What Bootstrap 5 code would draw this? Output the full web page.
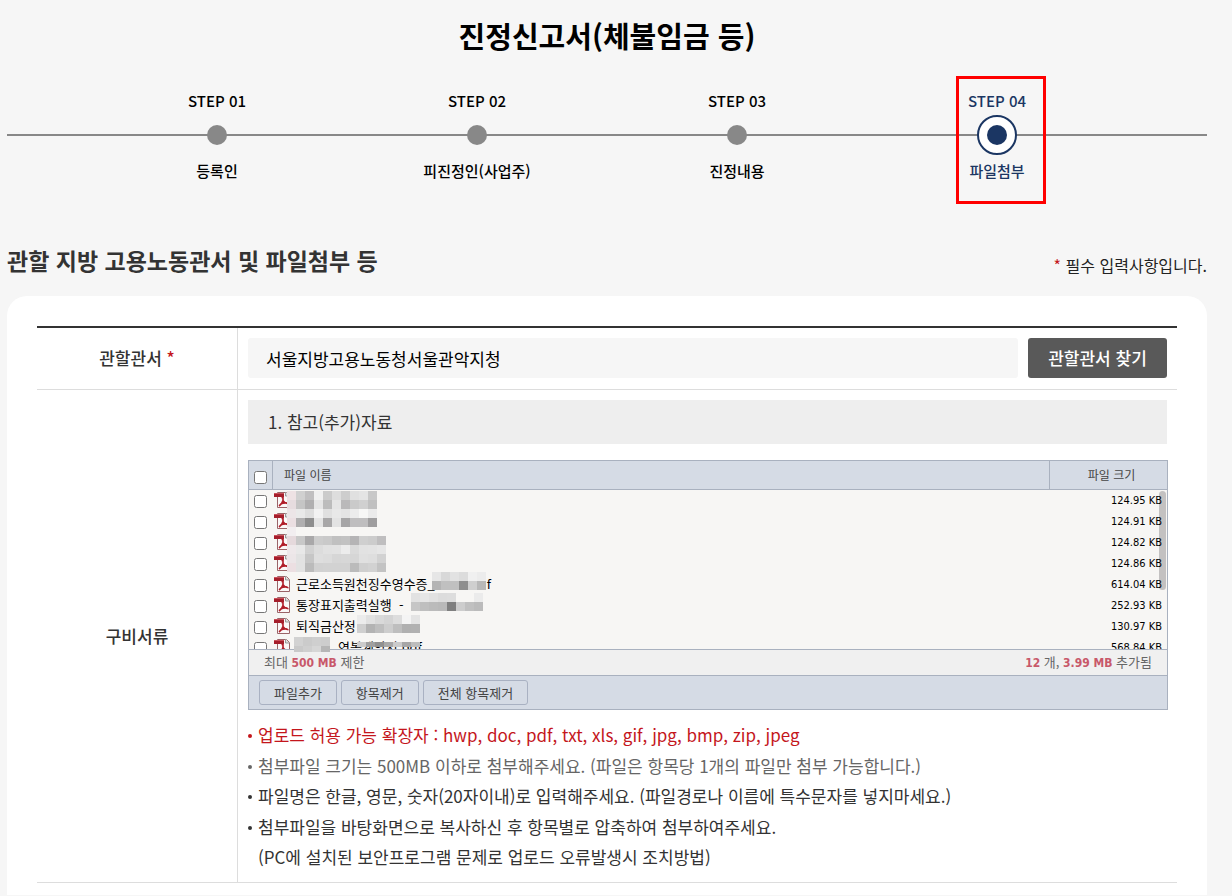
<!DOCTYPE html>
<html lang="ko">
<head>
<meta charset="utf-8">
<meta name="viewport" content="width=device-width, initial-scale=1">
<title>진정신고서(체불임금 등)</title>
<link href="https://cdn.jsdelivr.net/npm/bootstrap@5.3.0/dist/css/bootstrap.min.css" rel="stylesheet">
<style>
body{background:#f6f6f6;color:#333;font-family:"Noto Sans CJK KR",sans-serif;font-size:17px;line-height:24px}
.page{padding:13px 25px 0 7px}
.doc-title{font-size:29px;line-height:44px;font-weight:700;color:#000}
.req{color:#c4161c}

/* step indicator */
.steps{margin-top:19px;padding:0 80px;height:128px}
.steps::before{content:"";position:absolute;left:0;right:0;top:58px;height:2px;background:#888}
.step{font-size:15px;font-weight:500;color:#000;line-height:20px}
.step-box{width:90px;height:128px;padding-top:15px;position:relative}
.step-dot{width:40px;height:40px;margin:4px 0 6px}
.step-dot i{width:20px;height:20px;border-radius:50%;background:#888}
.step.current{color:#1b3663}
.current .step-box::after{content:"";position:absolute;top:0;bottom:0;left:4px;right:-4px;border:3px solid #f00}
.current .step-dot{border:2px solid #1b3663;border-radius:50%;background:#fff}
.current .step-dot i{background:#1b3663}

.section-head{margin-top:39px;margin-bottom:19px}
.section-head h2{font-size:23px;line-height:34px;font-weight:700}
.section-head p{font-size:16px;color:#222}

.panel{background:#fff;border-radius:20px 20px 0 0;padding:30px 30px 12px}
.form-grid{border-top:2px solid #333;border-collapse:separate;border-spacing:0;table-layout:fixed}
.form-grid>tbody>tr>*{border-bottom:1px solid #ddd;padding:10px}
.form-grid>tbody>tr:first-child>*{padding-bottom:11px}
.form-grid>tbody>tr>th{width:201px;border-right:1px solid #ddd;font-weight:500;text-align:center;vertical-align:middle}
.office-row{gap:10px}
.office{height:40px;background:#f6f6f6;border:0;border-radius:3px;padding:0 18px;font-size:17px;color:#000}
.office:focus{background:#f6f6f6}
.find{height:40px;width:139px;background:#595959;color:#fff;border:0;border-radius:3px;font-size:17px;font-weight:500;padding:0}
.find:hover{background:#444;color:#fff}
.sub-title{background:#eee;height:44px;padding:0 20px;font-size:17px;font-weight:400}

/* upload box */
.uploader{margin:16px -1px 10px 0;border:1px solid #a9b1bf;font-size:12px;line-height:16px;color:#444}
.uploader input{width:13px;height:13px;margin:0;display:block}
.up-head{height:29px;background:#d5dbe5;border-bottom:1px solid #a9b1bf}
.c-check{width:24px}
.up-head .c-check{width:23px;padding:5px 0 0 5px}
.up-head .c-name{border-left:1px solid #a9b1bf;border-right:1px solid #a9b1bf;padding-left:11px}
.up-head .c-size{width:117px;padding-left:6px}
.up-list{height:159px;background:#f7f6f4}
.up-list table{position:relative;font-size:13px;color:#000}
.up-list tr{height:21px}
.up-list td{padding:0 0 2px;vertical-align:middle}
.up-list td.c-check{padding:2px 0 0 5px}
.up-list svg{width:16px;height:16px;margin:0 6px 0 1px;display:block}
.up-list td.c-size{width:90px;text-align:right;padding:0 5px 0 0;font:11px/18px "DejaVu Sans Condensed","DejaVu Sans",sans-serif;font-stretch:condensed}
.thumb{position:absolute;right:1px;top:1px;width:7px;height:99px;border-radius:4px;background:#c3c1c1}
.mosaic{position:absolute;left:0;top:0;pointer-events:none}
.gap-f{padding-left:52px}
.gap-name{padding-left:42px}
.up-total{height:27px;background:#f0f0f0;border-top:1px solid #a9b1bf;border-bottom:1px solid #a9b1bf;padding:0 15px;color:#666}
.up-total b{font:bold 12px/16px "DejaVu Sans Condensed","DejaVu Sans",sans-serif;color:#c8586a}
.up-total span{font-size:13px}
.up-tools{height:33px;background:#d5dbe5;padding:0 10px;gap:4px}
.up-tools button{height:25px;padding:0 14px;border:1px solid #a9b1c2;border-radius:3px;background:#d5dbe5;color:#444;font-size:13px;line-height:16px}

.notes{line-height:30px;padding-left:10px}
.notes li{position:relative}
.notes li:nth-child(odd){margin-bottom:1px}
.notes .dim{color:#666}
.notes li::before{content:"";position:absolute;left:-10px;top:14px;width:4px;height:4px;border-radius:50%;background:currentColor}
</style>
</head>
<body>
<main class="page">
<h1 class="doc-title text-center mb-0">진정신고서(체불임금 등)</h1>

<ol class="steps list-unstyled d-flex position-relative mb-0">
<li class="step flex-fill w-25 d-flex justify-content-center position-relative"><div class="step-box d-flex flex-column align-items-center text-nowrap"><span>STEP 01</span><span class="step-dot d-flex align-items-center justify-content-center"><i></i></span><span>등록인</span></div></li>
<li class="step flex-fill w-25 d-flex justify-content-center position-relative"><div class="step-box d-flex flex-column align-items-center text-nowrap"><span>STEP 02</span><span class="step-dot d-flex align-items-center justify-content-center"><i></i></span><span>피진정인(사업주)</span></div></li>
<li class="step flex-fill w-25 d-flex justify-content-center position-relative"><div class="step-box d-flex flex-column align-items-center text-nowrap"><span>STEP 03</span><span class="step-dot d-flex align-items-center justify-content-center"><i></i></span><span>진정내용</span></div></li>
<li class="step current flex-fill w-25 d-flex justify-content-center position-relative" aria-current="step"><div class="step-box d-flex flex-column align-items-center text-nowrap"><span>STEP 04</span><span class="step-dot d-flex align-items-center justify-content-center"><i></i></span><span>파일첨부</span></div></li>
</ol>

<div class="section-head d-flex justify-content-between align-items-end">
<h2 class="mb-0">관할 지방 고용노동관서 및 파일첨부 등</h2>
<p class="mb-0"><span class="req">*</span> 필수 입력사항입니다.</p>
</div>

<section class="panel">
<table class="form-grid w-100">
<tbody>
<tr>
<th scope="row"><label for="office">관할관서 <span class="req">*</span></label></th>
<td><div class="office-row d-flex"><input id="office" class="office form-control" type="text" value="서울지방고용노동청서울관악지청" readonly><button type="button" class="find btn flex-shrink-0">관할관서 찾기</button></div></td>
</tr>
<tr>
<th scope="row">구비서류</th>
<td>
<h3 class="sub-title d-flex align-items-center mb-0">1. 참고(추가)자료</h3>
<div class="uploader">
<div class="up-head d-flex align-items-stretch">
<div class="c-check d-flex align-items-center flex-shrink-0"><input type="checkbox" aria-label="전체 선택"></div>
<div class="c-name flex-grow-1 d-flex align-items-center">파일 이름</div>
<div class="c-size d-flex align-items-center justify-content-center">파일 크기</div>
</div>
<div class="position-relative">
<div class="up-list overflow-hidden position-relative">
<div class="thumb"></div>
<table class="w-100"><tbody id="files"></tbody></table>
</div>
<svg class="mosaic" id="mosaic" width="260" height="164" aria-hidden="true" shape-rendering="crispEdges"></svg>
</div>
<div class="up-total d-flex justify-content-between align-items-center"><span>최대 <b>500 MB</b> 제한</span><span><b>12</b> 개, <b>3.99 MB</b> 추가됨</span></div>
<div class="up-tools d-flex align-items-center"><button type="button">파일추가</button><button type="button">항목제거</button><button type="button">전체 항목제거</button></div>
</div>
<ul class="notes list-unstyled mb-0">
<li class="req">업로드 허용 가능 확장자 : hwp, doc, pdf, txt, xls, gif, jpg, bmp, zip, jpeg</li>
<li class="dim">첨부파일 크기는 500MB 이하로 첨부해주세요. (파일은 항목당 1개의 파일만 첨부 가능합니다.)</li>
<li>파일명은 한글, 영문, 숫자(20자이내)로 입력해주세요. (파일경로나 이름에 특수문자를 넣지마세요.)</li>
<li>첨부파일을 바탕화면으로 복사하신 후 항목별로 압축하여 첨부하여주세요.<br>(PC에 설치된 보안프로그램 문제로 업로드 오류발생시 조치방법)</li>
</ul>
</td>
</tr>
</tbody>
</table>
</section>
</main>

<svg width="0" height="0" class="position-absolute" aria-hidden="true">
<symbol id="pdf" viewBox="0 0 16 16">
<path d="M3.500 .5h9l3 3v12h-12z" fill="#fbf8f8" stroke="#9a6468"/>
<path d="M11.500 0v4h4" fill="#ddd" stroke="#999"/>
<path d="M7.500 5.500h1.500v3c1 2 3 3 5.500 3.200M9 8.500c-.5 2-2 4-4 5.500M6.500 12c2-1 4-1.300 7-1" fill="none" stroke="#b01c28" stroke-width="1.600"/>
<path d="M0 1h10v4H0z" fill="#a51e2b"/><path d="M0 1h10v1H0z" fill="#c9505a"/>
</symbol>
</svg>

<script src="https://cdn.jsdelivr.net/npm/bootstrap@5.3.0/dist/js/bootstrap.bundle.min.js"></script>
<script>
const files = [["", "124.95"], ["", "124.91"], ["", "124.82"], ["", "124.86"],
  ["근로소득원천징수영수증_<span class='gap-f'>f</span>", "614.04"], ["통장표지출력실행 &nbsp;-", "252.93"],
  ["퇴직금산정", "130.97"], ["<span class='gap-name'>연봉계약서.pdf</span>", "568.84"]];
document.getElementById("files").innerHTML = files.map(([name, size], i) =>
  `<tr><td class="c-check"><input type="checkbox" aria-label="파일 ${i + 1} 선택"></td>` +
  `<td><div class="d-flex align-items-center"><svg><use href="#pdf"/></svg><span class="text-nowrap">${name}</span></div></td>` +
  `<td class="c-size">${size} KB</td></tr>`).join("");

// Masked names: [x, y, row height, colours of the 9px cells ("-" leaves a cell open)]
const masks = [
  [38, 1, 9, "eee2e4 d0d0d0 c0bfc0 f0f0f0 cbcbcb ddd cdcdcd e0e0e0 e4e4e4 c8c8c8"],
  [38, 10, 9, "e6dcdf c5c5c5 b0afb0 e5e5e5 bcbcbc e5e5e5 bab9ba cacaca d0d0d0 c0c0c0"],
  [38, 19, 9, "ece5e7 e9e9e9 dedede f2f2f2 e0e0e0 e8e8e8 e4e4e4 ececec f7f7f6 ebebeb"],
  [38, 28, 9, "ebdfe2 b0afb0 8e8e8e e4e4e4 a8a7a8 e3e3e3 a6a5a6 bfbebf bfbebf 9f9e9f"],
  [38, 37, 9, "f2eef0"],
  [38, 46, 9, "e5d9dc c8c8c8 a9a8a9 ccc c9c9c9 c0c0c0 c2c2c2 b5b4b5 cfcfcf ccc bfbebf"],
  [38, 55, 9, "eee8ea e8e8e8 d1d1d1 dcdcdc e1e1e1 e2e2e2 ececec dadada e2e2e2 e3e3e3 e6e6e6"],
  [38, 64, 9, "ece6e8 e2e2e2 c6c6c6 dedede dcdcdc d6d6d6 d7d7d7 d6d6d6 e0e0e0 dedede d2d2d2"],
  [38, 73, 9, "ecdfe2 e2e2e2 bbb d1d1d1 d2d2d2 d2d2d2 d2d2d2 bbb cfcfcf d2d2d2 c3c3c3"],
  [183, 82, 9, "e6e6e6 d8d8d8 e2e2e2 dcdcdc f0f0f0 ececec"],
  [183, 91, 9, "b4b4b4 c0c0c0 c0c0c0 8e8e8e cfcfcf b8b8b8"],
  [162, 103, 9, "e2e2e2 e6e6e6 e1e1e1 dcdcdc ddd - - ebebeb"],
  [162, 112, 9, "c6c6c6 bfbfbf bbb b9b9b9 7f7f7f cdcdcd c0c0c0 bbb"],
  [108, 125, 9, "ececec e1e1e1 d9d9d9 d4d4d4 ddd f4f4f4 e4e4e4"],
  [108, 134, 9, "cfcfcf b3b3b3 bebebe cdcdcd bebebe b0b0b0 b1b1b1"],
  [45, 147, 9, "d2d2d2 cbcbcb cfcfcf cdcdcd"],
  [45, 156, 6, "c9c9c9 cfcfcf d6d6d6 b6b6b6"],
  [108, 152, 5, "cbcbcb a0a0a0 909090 a8a8a8 cbcbcb a6a6a6 bdbdbd"]
];
document.getElementById("mosaic").innerHTML = masks.map(([x, y, h, row]) => row.split(" ").map((c, i) =>
  c === "-" ? "" : `<rect x="${x + i * 9}" y="${y}" width="9" height="${h}" fill="#${c}"/>`).join("")).join("");
</script>
</body>
</html>
